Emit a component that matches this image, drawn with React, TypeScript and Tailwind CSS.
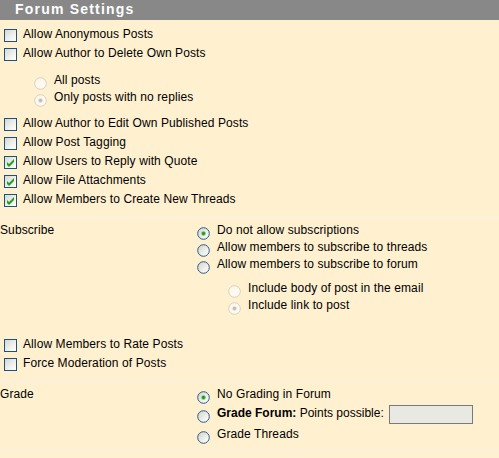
import React, { useId } from "react";

function cleanId(id: string) {
  return "g" + id.replace(/[^a-zA-Z0-9]/g, "");
}

function Checkbox({ checked }: { checked?: boolean }) {
  const id = cleanId(useId());
  return (
    <svg width="13" height="13" viewBox="0 0 13 13" className="block shrink-0">
      <defs>
        <linearGradient id={id} x1="0" y1="0" x2="1" y2="1">
          <stop offset="0" stopColor="#d6d6cf" />
          <stop offset="0.7" stopColor="#f6f6f3" />
          <stop offset="1" stopColor="#ffffff" />
        </linearGradient>
      </defs>
      <rect x="0.5" y="0.5" width="12" height="12" fill={`url(#${id})`} stroke="#1c5180" />
      {checked && <polygon points="3,6 5,8 10,3 10,6 5,11 3,9" fill="#21a121" />}
    </svg>
  );
}

function Radio({ checked, disabled }: { checked?: boolean; disabled?: boolean }) {
  const id = cleanId(useId());
  return (
    <svg width="13" height="13" viewBox="0 0 13 13" className="block shrink-0">
      <defs>
        <linearGradient id={id} x1="0" y1="0" x2="1" y2="1">
          <stop offset="0" stopColor={disabled ? "#fbf6ea" : "#d2d2ca"} />
          <stop offset="0.75" stopColor={disabled ? "#fffaf0" : "#f8f8f5"} />
          <stop offset="1" stopColor="#ffffff" />
        </linearGradient>
      </defs>
      <circle
        cx="6.5"
        cy="6.5"
        r="5.8"
        fill={`url(#${id})`}
        stroke={disabled ? "#d4d0c2" : "#2a5a86"}
        strokeWidth="1"
      />
      {checked && (
        <>
          <circle cx="6.5" cy="6.5" r="2.2" fill={disabled ? "#d8d5ca" : "#5fc45f"} />
          <circle cx="6.5" cy="6.5" r="1.4" fill={disabled ? "#bdbab0" : "#1c9a1c"} />
        </>
      )}
    </svg>
  );
}

function CheckRow({ label, checked }: { label: string; checked?: boolean }) {
  return (
    <div className="flex h-[19px] items-start pl-[4px]">
      <div className="mt-[5px]">
        <Checkbox checked={checked} />
      </div>
      <span className="ml-[6px] mt-[1px] leading-[19px] tracking-[0.1px] whitespace-nowrap">{label}</span>
    </div>
  );
}

function RadioRow({
  label,
  checked,
  disabled,
  h = "h-[17px]",
  children,
}: {
  label?: string;
  checked?: boolean;
  disabled?: boolean;
  h?: string;
  children?: React.ReactNode;
}) {
  return (
    <div className={`flex items-start ${h}`}>
      <div className="mt-[6px]">
        <Radio checked={checked} disabled={disabled} />
      </div>
      <div className="ml-[7px] mt-[1px] flex items-start leading-[17px] tracking-[0.1px] whitespace-nowrap">
        {label}
        {children}
      </div>
    </div>
  );
}

function Separator({ className }: { className: string }) {
  return <div className={`h-px bg-[#f6f2ea] ${className}`} />;
}

export default function App() {
  return (
    <div className="w-[499px] h-[458px] overflow-hidden bg-[#fff0d0] text-black text-[12px] font-['Liberation_Sans',Arial,sans-serif]">
      <div className="h-[20px] bg-[#888888] pl-[15px] text-white font-bold text-[14px] leading-[18px] tracking-[1.2px] whitespace-nowrap">
        Forum Settings
      </div>
      <div className="pt-[4px]">
        <CheckRow label="Allow Anonymous Posts" />
        <CheckRow label="Allow Author to Delete Own Posts" />
        <div className="mt-[9px] pl-[34px]">
          <RadioRow disabled label="All posts" />
          <RadioRow disabled checked label="Only posts with no replies" />
        </div>
        <div className="mt-[8px]">
          <CheckRow label="Allow Author to Edit Own Published Posts" />
          <CheckRow label="Allow Post Tagging" />
          <CheckRow checked label="Allow Users to Reply with Quote" />
          <CheckRow checked label="Allow File Attachments" />
          <CheckRow checked label="Allow Members to Create New Threads" />
        </div>
        <Separator className="mt-[9px]" />
        <div className="flex pt-[3px]">
          <div className="w-[197px] shrink-0 mt-[1px] leading-[17px] tracking-[0.1px]">Subscribe</div>
          <div>
            <RadioRow checked label="Do not allow subscriptions" />
            <RadioRow label="Allow members to subscribe to threads" />
            <RadioRow label="Allow members to subscribe to forum" />
            <div className="mt-[7px] pl-[31px]">
              <RadioRow disabled label="Include body of post in the email" />
              <RadioRow disabled checked label="Include link to post" />
            </div>
          </div>
        </div>
        <div className="mt-[21px]">
          <CheckRow label="Allow Members to Rate Posts" />
          <CheckRow label="Force Moderation of Posts" />
        </div>
        <Separator className="mt-[9px]" />
        <div className="flex pt-[3px]">
          <div className="w-[197px] shrink-0 mt-[1px] leading-[17px] tracking-[0.1px]">Grade</div>
          <div>
            <RadioRow checked label="No Grading in Forum" h="h-[19px]" />
            <RadioRow h="h-[21px]">
              <span className="font-bold tracking-normal">Grade Forum:</span>
              <span className="tracking-normal">&nbsp;Points possible:</span>
              <div className="ml-[5px] h-[19px] w-[84px] border border-[#7a7a7a] bg-[#e9e9e3]" />
            </RadioRow>
            <RadioRow label="Grade Threads" />
          </div>
        </div>
        <Separator className="mt-[8px]" />
      </div>
    </div>
  );
}
